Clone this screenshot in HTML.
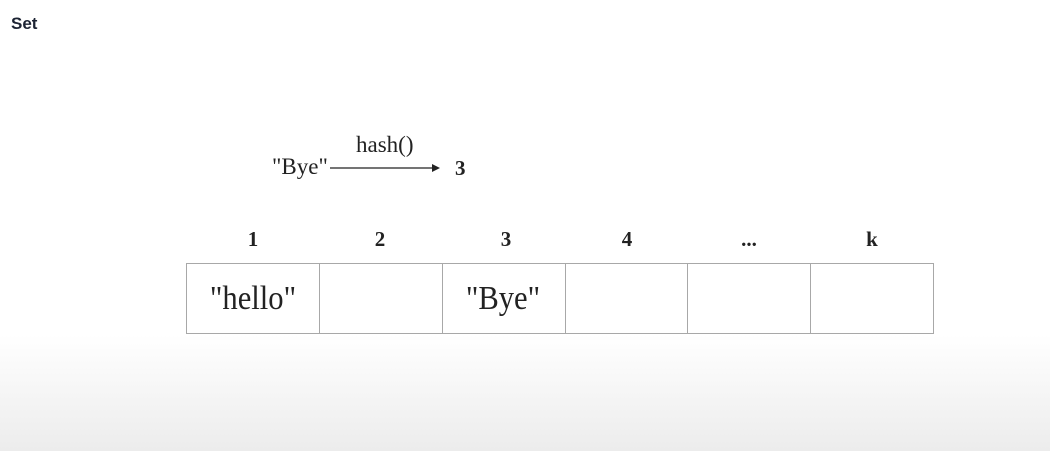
<!DOCTYPE html>
<html><head><style>
body{margin:0;width:1050px;height:451px;position:relative;overflow:hidden;background:linear-gradient(to bottom,#fff 0,#fff 335px,#ececec 451px);font-family:"Liberation Serif",serif;color:#222}
.t{position:absolute;white-space:nowrap}
.h{font-weight:bold;font-size:21px;transform:translateX(-50%)}
.cell{position:absolute;top:263px;height:71px;border:1px solid #a8a8a8;box-sizing:border-box;background:#fff}
</style></head><body>
<div class="t" style="left:11px;top:14px;font-family:'Liberation Sans',sans-serif;font-weight:bold;font-size:17px;color:#1c2333">Set</div>
<div class="t" style="left:272px;top:154px;font-size:23px">"Bye"</div>
<div class="t" style="left:356px;top:132px;font-size:23px">hash()</div>
<svg class="t" style="left:330px;top:162px" width="112" height="12"><line x1="0" y1="6" x2="104" y2="6" stroke="#222" stroke-width="1.3"/><path d="M102 2 L110 6 L102 10 Z" fill="#222"/></svg>
<div class="t" style="left:455px;top:156px;font-size:21px;font-weight:bold">3</div>
<div class="t h" style="left:253px;top:227px">1</div>
<div class="t h" style="left:380px;top:227px">2</div>
<div class="t h" style="left:506px;top:227px">3</div>
<div class="t h" style="left:627px;top:227px">4</div>
<div class="t h" style="left:749px;top:227px">...</div>
<div class="t h" style="left:872px;top:227px">k</div>
<div class="cell" style="left:186px;width:134px"></div>
<div class="cell" style="left:319px;width:124px"></div>
<div class="cell" style="left:442px;width:124px"></div>
<div class="cell" style="left:565px;width:124px"></div>
<div class="cell" style="left:687px;width:124px"></div>
<div class="cell" style="left:810px;width:124px"></div>
<div class="t" style="left:253px;top:280px;font-size:34px;transform:translateX(-50%) scaleX(0.9)">"hello"</div>
<div class="t" style="left:503px;top:280px;font-size:34px;transform:translateX(-50%) scaleX(0.9)">"Bye"</div>
</body></html>
